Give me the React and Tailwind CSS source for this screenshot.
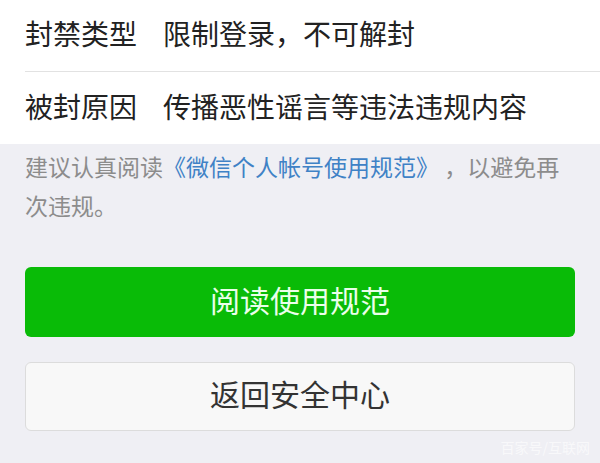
import React from 'react';

const rows = [
    { label: '封禁类型', value: '限制登录，不可解封' },
    { label: '被封原因', value: '传播恶性谣言等违法违规内容' }
];

const App = () => {
    return (
        <div
            className="relative w-[600px] h-[463px] overflow-hidden bg-[#efeff4] [text-spacing-trim:space-all]"
            style={{ fontFamily: '"Noto Sans CJK SC", "Noto Sans", sans-serif' }}
        >
            <div className="bg-white">
                {rows.map((row, i) => (
                    <div key={row.label} className="pl-[25px]">
                        <div
                            className={`flex items-center h-[72px] pb-[5px] text-[28px] text-[#222] ${i === 0 ? 'border-b border-[#e2e2e2]' : ''}`}
                        >
                            <span className="w-[138px] shrink-0">{row.label}</span>
                            <span>{row.value}</span>
                        </div>
                    </div>
                ))}
            </div>

            <p className="px-[25px] pt-[3px] text-[23px] leading-[39px] text-[#8c8c8c]">
                建议认真阅读<span className="text-[#3f82c6]">《微信个人帐号使用规范》</span> ，以避免再次违规。
            </p>

            <div className="px-[25px] mt-[42px] flex flex-col gap-[25px]">
                <button className="h-[70px] w-full pb-[6px] rounded-[6px] bg-[#09bb07] text-[30px] text-[#eaffea]">
                    阅读使用规范
                </button>
                <button className="h-[69px] w-full pb-[6px] rounded-[6px] border border-[#dcdcdc] bg-[#f8f8f8] text-[30px] text-[#333]">
                    返回安全中心
                </button>
            </div>

            <div className="absolute right-[10px] bottom-[5px] text-[14px] text-white/60">
                百家号/互联网
            </div>
        </div>
    );
};

export default App;
